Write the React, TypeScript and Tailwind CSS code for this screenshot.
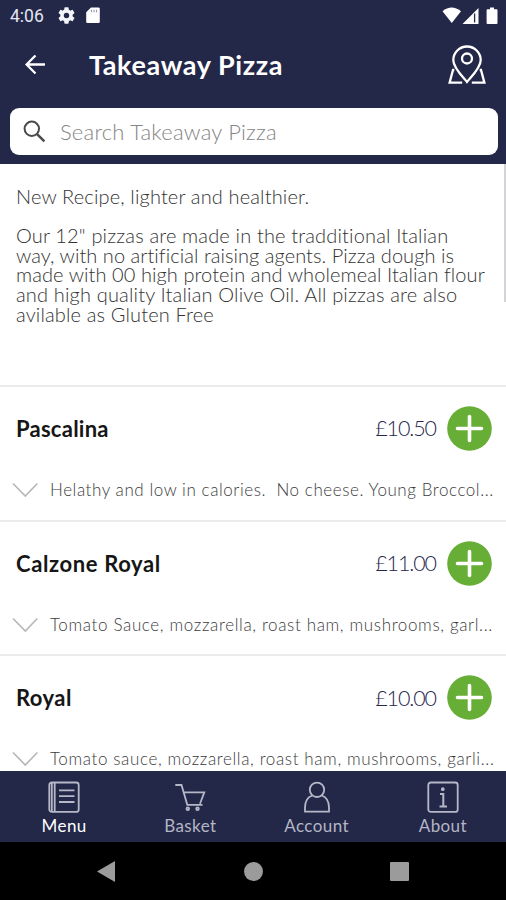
import type { ReactNode } from "react";

type MenuItem = {
  name: string;
  price: string;
  description: string;
  spacing: string;
  nameSpacing: string;
};

const ITEMS: MenuItem[] = [
  {
    name: "Pascalina",
    price: "£10.50",
    description: "Helathy and low in calories.\u00a0 No cheese. Young Broccol...",
    spacing: "tracking-[0.57px]",
    nameSpacing: "tracking-[0.25px]",
  },
  {
    name: "Calzone Royal",
    price: "£11.00",
    description: "Tomato Sauce, mozzarella, roast ham, mushrooms, garl...",
    spacing: "tracking-[0.64px]",
    nameSpacing: "tracking-[0.62px]",
  },
  {
    name: "Royal",
    price: "£10.00",
    description: "Tomato sauce, mozzarella, roast ham, mushrooms, garli...",
    spacing: "tracking-[0.62px]",
    nameSpacing: "tracking-[0.45px]",
  },
];

const INTRO: { text: string; spacing: string }[] = [
  { text: 'Our 12" pizzas are made in the tradditional Italian', spacing: "tracking-[0.16px]" },
  { text: "way, with no artificial raising agents. Pizza dough is", spacing: "tracking-[0.05px]" },
  { text: "made with 00 high protein and wholemeal Italian flour", spacing: "tracking-[0.08px]" },
  { text: "and high quality Italian Olive Oil. All pizzas are also", spacing: "tracking-[0.17px]" },
  { text: "avilable as Gluten Free", spacing: "tracking-[0.15px]" },
];

function StatusBar() {
  return (
    <div className="flex h-8 items-center justify-between pl-[10px] pr-[8px]">
      <div className="flex items-center">
        <span className="w-[48px] font-[Roboto] text-[17.5px] leading-8 text-[#e4e6f0]">4:06</span>
        <svg className="-mt-px" width="17" height="17" viewBox="2 2 20 20" fill="#f4f5fb">
          <path d="M19.14 12.94c.04-.3.06-.61.06-.94 0-.32-.02-.64-.07-.94l2.03-1.58a.49.49 0 0 0 .12-.61l-1.92-3.32a.49.49 0 0 0-.59-.22l-2.39.96c-.5-.38-1.03-.7-1.62-.94l-.36-2.54a.48.48 0 0 0-.48-.41h-3.84a.47.47 0 0 0-.47.41l-.36 2.54c-.59.24-1.13.57-1.62.94l-2.39-.96a.48.48 0 0 0-.59.22L2.74 8.87a.48.48 0 0 0 .12.61l2.03 1.58c-.05.3-.09.63-.09.94s.02.64.07.94l-2.03 1.58a.49.49 0 0 0-.12.61l1.92 3.32c.12.22.37.29.59.22l2.39-.96c.5.38 1.03.7 1.62.94l.36 2.54c.05.24.24.41.48.41h3.84c.24 0 .44-.17.47-.41l.36-2.54c.59-.24 1.13-.56 1.62-.94l2.39.96c.22.08.47 0 .59-.22l1.92-3.32a.47.47 0 0 0-.12-.61l-2.01-1.58zM12 15.2a3.2 3.2 0 1 1 0-6.400 3.200 3.200 0 0 1 0 6.400z" />
        </svg>
        <svg className="-mt-px ml-[11px]" width="14" height="17" viewBox="0 0 14 17">
          <path d="M5 .5h7.500a1.300 1.300 0 0 1 1.300 1.300v12.900a1.300 1.300 0 0 1-1.300 1.300H1.500a1.300 1.300 0 0 1-1.300-1.300V5.300z" fill="#fff" />
          <path d="M5.500 2.800v2.400M8 2.800v2.400M10.500 2.800v2.400" stroke="#9296b4" strokeWidth="1.100" />
        </svg>
      </div>
      <svg width="56" height="18" viewBox="0 0 56 18" fill="#fff">
        <path d="M.5 4.200Q9.500-3.200 19 4.200L9.800 16z" />
        <path d="M20.500 17 36.500 1v16z" />
        <path d="M32.600 6.500v9" stroke="#232748" strokeWidth="1.300" />
        <path d="M45.500 2.300h2.500V.6h4v1.700h2.600q.9 0 .9.900v12.900q0 .9-.9.900h-9.100q-.9 0-.9-.9V3.200q0-.9.900-.9z" />
      </svg>
    </div>
  );
}

function Header() {
  return (
    <header className="h-[164px] shrink-0 bg-[#232748]">
      <StatusBar />
      <div className="flex h-[66px] items-center pl-[25px] pr-[20px]">
        <svg width="21" height="20" viewBox="0 0 21 20" fill="none" stroke="#fff" strokeWidth="2.300">
          <path d="M20 9.500H2M10.500.5 1.600 9.500l8.900 9" />
        </svg>
        <h1 className="ml-[43px] grow whitespace-nowrap text-[27px] font-bold leading-8 tracking-[0.6px] text-white">Takeaway Pizza</h1>
        <svg width="38" height="40" viewBox="0 0 38 40" fill="none" stroke="#fff" strokeWidth="2.300">
          <path d="M19 37C14 31 5.300 22.500 5.300 15.200a13.700 13.700 0 0 1 27.400 0C32.700 22.500 24 31 19 37z" />
          <circle cx="19" cy="13.500" r="5" />
          <path d="M6.300 25H5L1.600 37.700h12.600M31.700 25H33l3.400 12.700H23.800" />
        </svg>
      </div>
      <div className="ml-[10px] mr-[8px] mt-[10px] flex h-[47px] items-center rounded-[9px] bg-white pl-[13px]">
        <svg width="24" height="24" viewBox="0 0 24 24" fill="none" stroke="#4a4a4a">
          <circle cx="8.800" cy="8.800" r="7.200" strokeWidth="2" />
          <path d="m13.800 13.800 7.600 7.600" strokeWidth="2.500" />
        </svg>
        <span className="ml-[13px] whitespace-nowrap text-[22px] font-light leading-8 tracking-[0.2px] text-[#858585]">Search Takeaway Pizza</span>
      </div>
    </header>
  );
}

function ItemRow({ item }: { item: MenuItem }) {
  return (
    <li className="h-[134.600px] border-t-2 border-[#ebebeb]">
      <div className="flex h-[83px] items-center pl-[16px] pr-[14px]">
        <span className={`grow whitespace-nowrap text-[22px] font-bold text-[#161616] ${item.nameSpacing}`}>{item.name}</span>
        <span className="whitespace-nowrap text-[21.500px] font-light tracking-[-1.100px] text-[#26274c]">{item.price}</span>
        <svg className="ml-[11px]" width="45" height="45" viewBox="0 0 45 45">
          <circle cx="22.500" cy="22.500" r="22.300" fill="#66ae35" />
          <path d="M22.500 10.500v24M10.500 22.500h24" stroke="#fff" strokeWidth="3.600" strokeLinecap="round" />
        </svg>
      </div>
      <div className="flex h-[40px] items-center pl-[12px]">
        <svg width="26" height="16" viewBox="0 0 26 16" fill="none" stroke="#b8b8b8" strokeWidth="1.700">
          <path d="M1 1.500 13.300 14 25.300 1.500" />
        </svg>
        <span className={`ml-[12px] whitespace-nowrap text-[17px] font-light text-[#3c3c3c] ${item.spacing}`}>{item.description}</span>
      </div>
    </li>
  );
}

function Tab({ label, active, children }: { label: string; active?: boolean; children: ReactNode }) {
  return (
    <div className={`flex flex-1 flex-col items-center pt-[9px] ${active ? "text-white" : "text-[#b4b6c5]"}`}>
      <svg width="34" height="34" viewBox="0 0 34 34" fill="none" stroke="#b6b8c8" strokeWidth="1.800">
        {children}
      </svg>
      <span className="mt-[1px] whitespace-nowrap text-[17px] leading-[22px] tracking-[0.4px]">{label}</span>
    </div>
  );
}

function TabBar() {
  return (
    <nav className="flex h-[71px] shrink-0 bg-[#232748] pl-px">
      <Tab label="Menu" active>
        <rect x="2.300" y="2.500" width="29.400" height="29.400" rx="2.500" />
        <path d="M4.800 3v28M7.700 3v28M12 10.300h15.500M12 16.200h15.500M12 22h15.500" />
      </Tab>
      <Tab label="Basket">
        <path d="M2.300 5h6.200l5.800 19.800h15.200M10.600 12.300h20.700l-4.300 11.500" />
        <circle cx="14.800" cy="28.800" r="1.300" />
        <circle cx="24.500" cy="28.800" r="1.300" />
      </Tab>
      <Tab label="Account">
        <circle cx="17" cy="9.800" r="7.200" />
        <path d="M12.300 15.500C7.500 17.200 5 21.200 5 27.500v4.200h24v-4.200c0-6.300-2.500-10.300-7.300-12" />
      </Tab>
      <Tab label="About">
        <rect x="2.300" y="2.500" width="29.400" height="29.400" rx="2.500" />
        <path d="M14 14h3.300v12.300M13.500 26.500h7.500" strokeWidth="2" />
        <circle cx="16.800" cy="9.200" r="1" />
      </Tab>
    </nav>
  );
}

function SystemNav() {
  return (
    <div className="flex h-[58px] shrink-0 items-center justify-between bg-black px-[97px]">
      <svg width="18" height="21" viewBox="0 0 18 21" fill="#9b9b9b">
        <path d="M0 10.500 18 0v21z" />
      </svg>
      <div className="ml-px size-[19px] rounded-full bg-[#9b9b9b]" />
      <div className="size-[19px] rounded-[1px] bg-[#9b9b9b]" />
    </div>
  );
}

export default function App() {
  return (
    <div className="flex h-[900px] w-[506px] flex-col overflow-hidden bg-white font-[Lato,sans-serif]">
      <Header />
      <main className="relative h-[607px] shrink-0 overflow-hidden bg-white">
        <div className="h-[221px] pl-[16px] pt-[23px] text-[20px] font-light leading-[19.600px] text-[#333]">
          <p className="whitespace-nowrap tracking-[0.15px]">New Recipe, lighter and healthier.</p>
          <div className="mt-[19.600px]">
            {INTRO.map((line) => (
              <p key={line.text} className={`whitespace-nowrap ${line.spacing}`}>
                {line.text}
              </p>
            ))}
          </div>
        </div>
        <ul>
          {ITEMS.map((item) => (
            <ItemRow key={item.name} item={item} />
          ))}
        </ul>
        <div className="absolute right-0 top-0 h-[138px] w-[2px] bg-[#d4d4d6]" />
      </main>
      <TabBar />
      <SystemNav />
    </div>
  );
}
